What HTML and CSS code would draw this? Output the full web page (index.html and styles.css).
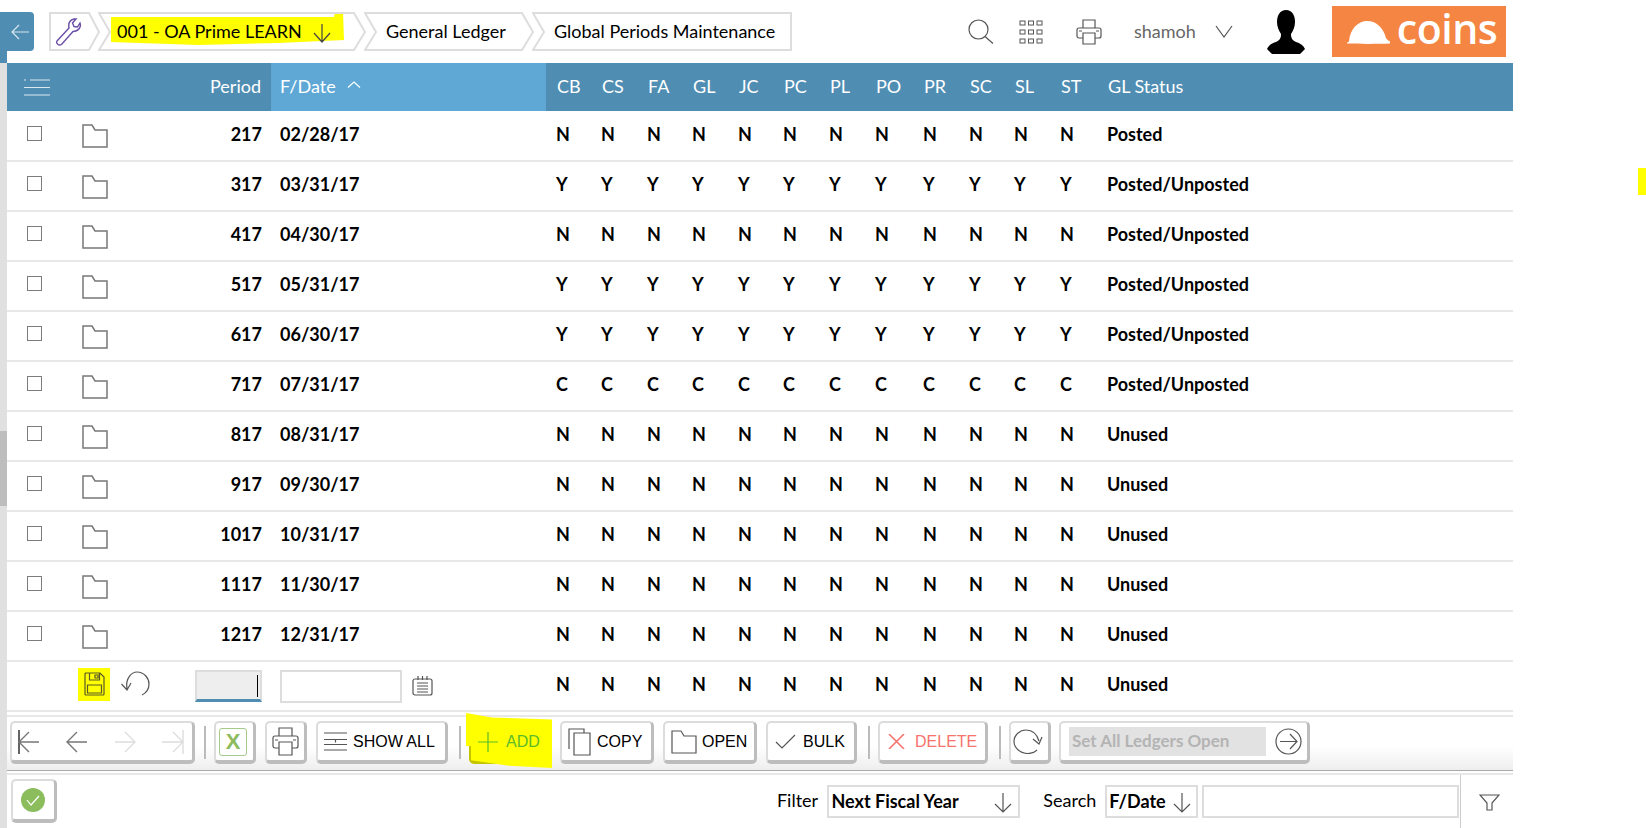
FILE: index.html
```html
<!DOCTYPE html>
<html lang="en">
<head>
    <meta charset="UTF-8">
    <title>Global Periods Maintenance</title>
    <link rel="stylesheet" href="styles.css">
</head>
<body>

<header class="topbar">
    <button class="back" type="button">
        <svg width="18" height="16" viewBox="0 0 18 16"><path d="M18 8H1M8 1L1 8l7 7"/></svg>
    </button>

    <nav class="crumbs">
        <div class="crumb crumb-tool">
            <svg class="crumb-frame" width="51" height="39"><polygon points="1,1 40,1 50,20 40,38 1,38"/></svg>
            <svg class="wrench" width="27" height="28" viewBox="0 0 27 28"><path d="M2 23L14 10C13 5 15 2 19 1h2l-3.500 4 1.500 3.500 3.500.5L25 5c1.500 4-1.500 8.500-7 8.500L6.500 26.500C4 28 .5 25.500 2 23z"/></svg>
        </div>
        <div class="crumb crumb-company">
            <svg class="crumb-frame" width="268" height="39">
                <polygon class="marker" points="13,5 236,5 237,0 245,0 246,28 180,31 100,33 13,30"/>
                <polygon points="1,1 256,1 267,20 256,38 1,38 12,20"/>
            </svg>
            <span class="crumb-text">001 - OA Prime LEARN</span>
            <svg class="arrow-down" width="20" height="19" viewBox="0 0 20 19"><path d="M10 0v18M2 9l8 9 8-9"/></svg>
        </div>
        <div class="crumb crumb-ledger">
            <svg class="crumb-frame" width="170" height="39"><polygon points="1,1 158,1 169,20 158,38 1,38 12,20"/></svg>
            <span class="crumb-text">General Ledger</span>
        </div>
        <div class="crumb crumb-global">
            <svg class="crumb-frame" width="260" height="39"><polygon points="1,1 259,1 259,38 1,38 12,20"/></svg>
            <span class="crumb-text">Global Periods Maintenance</span>
        </div>
    </nav>

    <div class="top-tools">
        <svg class="tool-search" width="26" height="25" viewBox="0 0 26 25"><circle cx="10.500" cy="10.500" r="9.500"/><path d="M17 17.500l8 7"/></svg>
        <svg class="tool-apps" width="24" height="24" viewBox="0 0 24 24">
            <rect x="1" y="1" width="5" height="4"/><rect x="9.500" y="1" width="5" height="4"/><rect x="18" y="1" width="5" height="4"/>
            <rect x="1" y="10" width="5" height="4"/><rect x="9.500" y="10" width="5" height="4"/><rect x="18" y="10" width="5" height="4"/>
            <rect x="1" y="19" width="5" height="4"/><rect x="9.500" y="19" width="5" height="4"/><rect x="18" y="19" width="5" height="4"/>
        </svg>
        <svg class="tool-print" width="26" height="26" viewBox="0 0 26 26"><path d="M7 9V1h12v8M7 19H3a2 2 0 0 1-2-2v-6a2 2 0 0 1 2-2h20a2 2 0 0 1 2 2v6a2 2 0 0 1-2 2h-4M7 14h12v11H7zM3 12h3M20 12h3"/></svg>
        <span class="user-name">shamoh</span>
        <svg class="user-caret" width="18" height="13" viewBox="0 0 18 13"><path d="M1 1l8 11 8-11"/></svg>
        <svg class="avatar" width="38" height="44" viewBox="0 0 38 44"><path d="M19 0c6 0 9 5 9 12 0 5-2 9-4 12 0 4 1 6 5 8 4 1 7 3 9 7l-5 5H5l-5-5c2-4 5-6 9-7 4-2 5-4 5-8-2-3-4-7-4-12C10 5 13 0 19 0z"/></svg>
        <div class="logo">
            <svg width="44" height="24" viewBox="0 0 44 24"><path d="M0 23.500c0-1 1-1.500 2-2C3 9 11 1 20 1c9 0 16 6 19 17 1 2 3 3 4 3.500v2C30 24 12 24 0 23.500z"/></svg>
            <span class="logo-text">coins</span>
        </div>
    </div>
</header>

<div class="page">
    <aside class="rail"><div class="rail-thumb"></div></aside>

    <main class="content">
        <table class="grid">
            <colgroup>
                <col class="c-check"><col class="c-open"><col class="c-period"><col class="c-date">
                <col class="c45"><col class="c46"><col class="c45"><col class="c46"><col class="c45"><col class="c46">
                <col class="c46"><col class="c48"><col class="c46"><col class="c45"><col class="c46"><col class="c47">
                <col class="c-status">
            </colgroup>
            <thead>
                <tr>
                    <th class="menu-cell"><svg width="26" height="17" viewBox="0 0 26 17"><path d="M0 1h2M6 1h20M0 8.500h26M0 16h26"/></svg></th>
                    <th></th>
                    <th class="num">Period</th>
                    <th class="sorted">F/Date <svg width="14" height="7" viewBox="0 0 14 7"><path d="M1 6.500L7 1l6 5.500"/></svg></th>
                    <th>CB</th><th>CS</th><th>FA</th><th>GL</th><th>JC</th><th>PC</th><th>PL</th><th>PO</th><th>PR</th><th>SC</th><th>SL</th><th>ST</th>
                    <th>GL Status</th>
                </tr>
            </thead>
            <tbody>
                <tr><td class="check"><span class="box"></span></td><td><svg class="folder" width="26" height="24" viewBox="0 0 26 24"><path d="M1 1h9l3 5h12v17H1z"/></svg></td><td class="num">217</td><td class="date">02/28/17</td><td>N</td><td>N</td><td>N</td><td>N</td><td>N</td><td>N</td><td>N</td><td>N</td><td>N</td><td>N</td><td>N</td><td>N</td><td>Posted</td></tr>
                <tr><td class="check"><span class="box"></span></td><td><svg class="folder" width="26" height="24" viewBox="0 0 26 24"><path d="M1 1h9l3 5h12v17H1z"/></svg></td><td class="num">317</td><td class="date">03/31/17</td><td>Y</td><td>Y</td><td>Y</td><td>Y</td><td>Y</td><td>Y</td><td>Y</td><td>Y</td><td>Y</td><td>Y</td><td>Y</td><td>Y</td><td>Posted/Unposted</td></tr>
                <tr><td class="check"><span class="box"></span></td><td><svg class="folder" width="26" height="24" viewBox="0 0 26 24"><path d="M1 1h9l3 5h12v17H1z"/></svg></td><td class="num">417</td><td class="date">04/30/17</td><td>N</td><td>N</td><td>N</td><td>N</td><td>N</td><td>N</td><td>N</td><td>N</td><td>N</td><td>N</td><td>N</td><td>N</td><td>Posted/Unposted</td></tr>
                <tr><td class="check"><span class="box"></span></td><td><svg class="folder" width="26" height="24" viewBox="0 0 26 24"><path d="M1 1h9l3 5h12v17H1z"/></svg></td><td class="num">517</td><td class="date">05/31/17</td><td>Y</td><td>Y</td><td>Y</td><td>Y</td><td>Y</td><td>Y</td><td>Y</td><td>Y</td><td>Y</td><td>Y</td><td>Y</td><td>Y</td><td>Posted/Unposted</td></tr>
                <tr><td class="check"><span class="box"></span></td><td><svg class="folder" width="26" height="24" viewBox="0 0 26 24"><path d="M1 1h9l3 5h12v17H1z"/></svg></td><td class="num">617</td><td class="date">06/30/17</td><td>Y</td><td>Y</td><td>Y</td><td>Y</td><td>Y</td><td>Y</td><td>Y</td><td>Y</td><td>Y</td><td>Y</td><td>Y</td><td>Y</td><td>Posted/Unposted</td></tr>
                <tr><td class="check"><span class="box"></span></td><td><svg class="folder" width="26" height="24" viewBox="0 0 26 24"><path d="M1 1h9l3 5h12v17H1z"/></svg></td><td class="num">717</td><td class="date">07/31/17</td><td>C</td><td>C</td><td>C</td><td>C</td><td>C</td><td>C</td><td>C</td><td>C</td><td>C</td><td>C</td><td>C</td><td>C</td><td>Posted/Unposted</td></tr>
                <tr><td class="check"><span class="box"></span></td><td><svg class="folder" width="26" height="24" viewBox="0 0 26 24"><path d="M1 1h9l3 5h12v17H1z"/></svg></td><td class="num">817</td><td class="date">08/31/17</td><td>N</td><td>N</td><td>N</td><td>N</td><td>N</td><td>N</td><td>N</td><td>N</td><td>N</td><td>N</td><td>N</td><td>N</td><td>Unused</td></tr>
                <tr><td class="check"><span class="box"></span></td><td><svg class="folder" width="26" height="24" viewBox="0 0 26 24"><path d="M1 1h9l3 5h12v17H1z"/></svg></td><td class="num">917</td><td class="date">09/30/17</td><td>N</td><td>N</td><td>N</td><td>N</td><td>N</td><td>N</td><td>N</td><td>N</td><td>N</td><td>N</td><td>N</td><td>N</td><td>Unused</td></tr>
                <tr><td class="check"><span class="box"></span></td><td><svg class="folder" width="26" height="24" viewBox="0 0 26 24"><path d="M1 1h9l3 5h12v17H1z"/></svg></td><td class="num">1017</td><td class="date">10/31/17</td><td>N</td><td>N</td><td>N</td><td>N</td><td>N</td><td>N</td><td>N</td><td>N</td><td>N</td><td>N</td><td>N</td><td>N</td><td>Unused</td></tr>
                <tr><td class="check"><span class="box"></span></td><td><svg class="folder" width="26" height="24" viewBox="0 0 26 24"><path d="M1 1h9l3 5h12v17H1z"/></svg></td><td class="num">1117</td><td class="date">11/30/17</td><td>N</td><td>N</td><td>N</td><td>N</td><td>N</td><td>N</td><td>N</td><td>N</td><td>N</td><td>N</td><td>N</td><td>N</td><td>Unused</td></tr>
                <tr><td class="check"><span class="box"></span></td><td><svg class="folder" width="26" height="24" viewBox="0 0 26 24"><path d="M1 1h9l3 5h12v17H1z"/></svg></td><td class="num">1217</td><td class="date">12/31/17</td><td>N</td><td>N</td><td>N</td><td>N</td><td>N</td><td>N</td><td>N</td><td>N</td><td>N</td><td>N</td><td>N</td><td>N</td><td>Unused</td></tr>
                <tr class="edit-row">
                    <td colspan="2">
                        <div class="edit-actions">
                            <span class="save-mark"><svg width="21" height="24" viewBox="0 0 21 24"><path d="M2 1h14l4 4v17a1 1 0 0 1-1 1H2a1 1 0 0 1-1-1V2a1 1 0 0 1 1-1zM5.500 1v7h10V1M11 3h3v3h-3zM3.500 13h14v8h-14z"/></svg></span>
                            <svg class="undo" width="29" height="26" viewBox="0 0 29 26"><path d="M6 18C4 7 11 1 16 1c7 0 12 6 12 12 0 5-3 9-7 11M.5 13L6 19l4-7"/></svg>
                        </div>
                    </td>
                    <td class="num"><span class="field-period"><span class="caret"></span></span></td>
                    <td class="date">
                        <div class="date-edit">
                            <span class="field-date"></span>
                            <svg width="21" height="20" viewBox="0 0 21 20"><path d="M3 3h15a2 2 0 0 1 2 2v12a2 2 0 0 1-2 2H3a2 2 0 0 1-2-2V5a2 2 0 0 1 2-2zM6 0v4M10.500 0v4M15 0v4M5 7h11M5 10h11M5 13h11M5 16h11"/></svg>
                        </div>
                    </td>
                    <td>N</td><td>N</td><td>N</td><td>N</td><td>N</td><td>N</td><td>N</td><td>N</td><td>N</td><td>N</td><td>N</td><td>N</td><td>Unused</td>
                </tr>
            </tbody>
        </table>

        <div class="toolbar">
            <div class="btn nav-group">
                <svg class="nav-on" width="22" height="24" viewBox="0 0 22 24"><path class="nav-bar" d="M1 0v24"/><path d="M21 12H1M11 2L1 12l10 10"/></svg>
                <svg class="nav-on" width="22" height="24" viewBox="0 0 22 24"><path d="M21 12H1M11 2L1 12l10 10"/></svg>
                <svg class="nav-off" width="22" height="24" viewBox="0 0 22 24"><path d="M1 12h20M11 2l10 10-10 10"/></svg>
                <svg class="nav-off" width="22" height="24" viewBox="0 0 22 24"><path d="M0 12h21M11 2l10 10-10 10M21 0v24"/></svg>
            </div>
            <span class="sep sep-first"></span>
            <button class="btn btn-excel" type="button"><span class="excel-x">X</span></button>
            <button class="btn btn-print" type="button">
                <svg width="27" height="29" viewBox="0 0 27 29"><path d="M7 9V1h13v8M7 21H3a2 2 0 0 1-2-2v-8a2 2 0 0 1 2-2h21a2 2 0 0 1 2 2v8a2 2 0 0 1-2 2h-4M7 15h13v13H7zM3 13h3M21 13h3"/></svg>
            </button>
            <button class="btn btn-showall" type="button">
                <svg width="23" height="19" viewBox="0 0 23 19"><path d="M0 1h23M0 7.500h23M0 12.500h23M0 18h23M11.500 7.500v3"/></svg>
                SHOW ALL
            </button>
            <span class="sep"></span>
            <button class="btn btn-add" type="button">
                <svg width="20" height="20" viewBox="0 0 20 20"><path d="M10 0v20M0 10h20"/></svg>
                ADD
            </button>
            <button class="btn btn-copy" type="button">
                <svg width="23" height="28" viewBox="0 0 23 28"><path d="M1 21V1h15v4M6 5h16v22H6z"/></svg>
                COPY
            </button>
            <button class="btn btn-open" type="button">
                <svg width="26" height="24" viewBox="0 0 26 24"><path d="M1 1h9l3 5h12v17H1z"/></svg>
                OPEN
            </button>
            <button class="btn btn-bulk" type="button">
                <svg width="21" height="15" viewBox="0 0 21 15"><path d="M1 8l6 6L20 1"/></svg>
                BULK
            </button>
            <span class="sep"></span>
            <button class="btn btn-delete" type="button">
                <svg width="17" height="15" viewBox="0 0 17 15"><path d="M1 0l15 15M16 0L1 15"/></svg>
                DELETE
            </button>
            <span class="sep"></span>
            <button class="btn btn-refresh" type="button">
                <svg width="30" height="25" viewBox="0 0 30 25"><path d="M24 21c-2.500 2.500-6 3.500-9 3.500C7.500 24.500 1 19 1 12.500S7 1 13 1c6 0 11 4 13 11M20 10l6 5 3-7"/></svg>
            </button>
            <div class="btn btn-set">
                <span class="set-field">Set All Ledgers Open</span>
                <svg width="27" height="27" viewBox="0 0 27 27"><circle cx="13.500" cy="13.500" r="12.500"/><path d="M5 13.500h17M15 6l7 7.500-7 7.500"/></svg>
            </div>
        </div>

        <footer class="footer">
            <button class="btn btn-status" type="button">
                <svg width="24" height="24" viewBox="0 0 24 24"><circle class="ok-dot" cx="12" cy="12" r="12"/><path class="ok-tick" d="M6 12l4 5 8-9"/></svg>
            </button>
            <label class="filter-label">Filter</label>
            <div class="select select-filter">
                <span>Next Fiscal Year</span>
                <svg width="18" height="20" viewBox="0 0 18 20"><path d="M9 0v19M1 11l8 8 8-8"/></svg>
            </div>
            <label class="search-label">Search</label>
            <div class="select select-search">
                <span>F/Date</span>
                <svg width="18" height="20" viewBox="0 0 18 20"><path d="M9 0v19M1 11l8 8 8-8"/></svg>
            </div>
            <div class="search-input"></div>
            <div class="filter-cell">
                <svg width="21" height="17" viewBox="0 0 21 17"><path d="M1 1h19l-7 8v7H8V9z"/></svg>
            </div>
        </footer>
    </main>
</div>

<div class="margin-mark"></div>

</body>
</html>
```

FILE: styles.css
```css
* {
    box-sizing: border-box;
}

html, body {
    margin: 0;
    height: 828px;
    overflow: hidden;
    background-color: #fff;
}

body {
    position: relative;
    font-family: "Lato", "Liberation Sans", sans-serif;
    font-size: 18px;
    color: #000;
}

svg {
    display: block;
    flex: none;
    fill: none;
    stroke: #555;
    stroke-width: 1.2;
}

/* top bar */
.topbar {
    display: flex;
    height: 63px;
    padding-top: 12px;
    background: linear-gradient(#4f8db3, #4f8db3) no-repeat 0 12px / 7px 51px;
}

.back {
    width: 34px;
    height: 39px;
    padding: 0 0 0 11px;
    border: none;
    border-radius: 0 4px 4px 0;
    background-color: #4f8db3;
}

.back svg {
    stroke: #d7e6ef;
}

.crumbs {
    display: flex;
    height: 39px;
    margin-left: 15px;
}

.crumb {
    position: relative;
    display: flex;
    align-items: center;
    height: 39px;
}

.crumb-frame {
    position: absolute;
    top: 0;
    left: 0;
    stroke: #ddd;
    stroke-width: 2;
}

.crumb-frame .marker {
    fill: #ffff00;
    stroke: none;
}

.crumb-text {
    position: relative;
    padding-bottom: 2px;
}

.crumb-tool {
    width: 49px;
}

.wrench {
    position: relative;
    margin-left: 6px;
    stroke: #6a4ea8;
    stroke-width: 1.4;
}

.crumb-company {
    width: 266px;
    padding-left: 19px;
}

.arrow-down {
    position: relative;
    margin-left: 10px;
    margin-top: 3px;
    stroke: #444;
}

.crumb-ledger {
    width: 168px;
    padding-left: 22px;
}

.crumb-global {
    width: 260px;
    padding-left: 22px;
}

.top-tools {
    display: flex;
    align-items: center;
    height: 51px;
    margin-top: -6px;
    margin-left: 176px;
}

.tool-apps {
    margin-left: 25px;
    stroke-width: 1;
}

.tool-print {
    margin-left: 33px;
}

.user-name {
    margin-left: 32px;
    color: #666;
    padding-bottom: 2px;
}

.user-caret {
    margin-left: 19px;
}

.avatar {
    margin-left: 34px;
    fill: #000;
    stroke: none;
}

.logo {
    display: flex;
    align-items: center;
    width: 174px;
    height: 51px;
    margin-left: 27px;
    padding-left: 15px;
    background-color: #f48542;
}

.logo svg {
    fill: #fff;
    stroke: none;
}

.logo-text {
    margin-left: 6px;
    font-family: "Open Sans", sans-serif;
    font-size: 41px;
    font-weight: 600;
    letter-spacing: -0.5px;
    line-height: 51px;
    color: #fff;
    padding-bottom: 7px;
}

/* page body */
.page {
    display: flex;
    height: 765px;
}

.rail {
    width: 7px;
    background-color: #e0e0e0;
}

.rail-thumb {
    height: 75px;
    margin-top: 368px;
    background-color: #bdbdbd;
}

.content {
    width: 1506px;
}

/* grid */
.grid {
    width: 1506px;
    table-layout: fixed;
    border-collapse: collapse;
}

.c-check { width: 63px; }
.c-open { width: 50px; }
.c-period { width: 151px; }
.c-date { width: 275px; }
.c45 { width: 45px; }
.c46 { width: 46px; }
.c47 { width: 47px; }
.c48 { width: 48px; }
.c-status { width: 416px; }

.grid th {
    height: 48px;
    padding: 0 0 2px 11px;
    background-color: #4f8db3;
    font-weight: 400;
    text-align: left;
    color: #fff;
}

.grid th.num {
    padding: 0 10px 2px 0;
    text-align: right;
}

.grid th.sorted {
    padding-left: 9px;
    background-color: #5fa8d6;
}

.sorted svg {
    display: inline-block;
    margin: 0 0 5px 7px;
    stroke: #fff;
}

.grid .menu-cell {
    padding-left: 17px;
    padding-bottom: 0;
}

.menu-cell svg {
    stroke: #dbe8f0;
}

.grid td {
    height: 50px;
    padding: 0 0 4px 10px;
    border-bottom: 2px solid #e8e8e8;
    font-weight: 700;
    white-space: nowrap;
}

.grid td.num {
    padding-left: 0;
    padding-right: 9px;
    text-align: right;
}

.grid td.date {
    padding-left: 9px;
}

.grid td.check {
    padding: 0 0 5px 20px;
}

.edit-row td.num,
.edit-row td.date {
    padding-bottom: 0;
}

.box {
    display: block;
    width: 15px;
    height: 15px;
    border: 1.5px solid #7c7c7c;
}

.folder {
    margin: 5px 0 0 2px;
    stroke: #777;
    stroke-width: 1.5;
}

.edit-actions {
    display: flex;
    align-items: center;
    gap: 11px;
    margin-left: 61px;
}

.save-mark {
    display: flex;
    flex: none;
    justify-content: center;
    align-items: center;
    width: 32px;
    height: 33px;
    background-color: #ffff00;
}

.save-mark svg {
    stroke: #5a5a2a;
}

.field-period {
    display: inline-flex;
    justify-content: flex-end;
    align-items: center;
    width: 67px;
    height: 32px;
    padding-right: 2px;
    vertical-align: middle;
    border: 2px solid #ddd;
    border-bottom: 3px solid #4f8db3;
    background-color: #eee;
}

.caret {
    width: 1px;
    height: 22px;
    background-color: #000;
}

.date-edit {
    display: flex;
    align-items: center;
    gap: 10px;
}

.field-date {
    width: 122px;
    height: 33px;
    border: 2px solid #ddd;
}

/* toolbar */
.toolbar {
    display: flex;
    align-items: flex-start;
    gap: 9px;
    height: 56px;
    margin-top: 3px;
    padding: 4px 0 0 3px;
    border-top: 2px solid #e8e8e8;
    border-bottom: 1px solid #aaa;
    background: linear-gradient(#fff 55%, #eee);
}

.btn {
    display: flex;
    align-items: center;
    height: 43px;
    padding: 0 0 0 6px;
    border: 2px solid #dcdcdc;
    border-right: 3px solid #bdbdbd;
    border-bottom: 4px solid #bdbdbd;
    border-radius: 5px;
    background-color: #fff;
    font-family: "Liberation Sans", sans-serif;
    font-size: 16px;
    color: #000;
}

.sep {
    width: 2px;
    height: 33px;
    margin-top: 5px;
    margin-left: 2px;
    margin-right: -1px;
    background-color: #bbb;
}

.sep-first {
    margin-left: 0;
}

.nav-group {
    gap: 26px;
    width: 185px;
    background-color: #fff;
}

.nav-on path {
    stroke: #777;
    stroke-width: 1.4;
}

.nav-on .nav-bar {
    stroke: #222;
}

.nav-off {
    stroke: #ddd;
    stroke-width: 1.4;
}

.btn-excel {
    width: 42px;
    padding-left: 3px;
}

.excel-x {
    display: block;
    width: 28px;
    height: 28px;
    border: 1.500px solid #a5c98a;
    border-radius: 3px;
    font-size: 22px;
    font-weight: 700;
    line-height: 25px;
    text-align: center;
    color: #8dbb5e;
}

.btn-print {
    width: 42px;
    padding-left: 5px;
}

.btn-showall {
    gap: 6px;
    width: 132px;
}

.btn-add {
    position: relative;
    z-index: 0;
    gap: 8px;
    width: 82px;
    padding-left: 7px;
    border-color: #c4c400;
    background-color: #ffff00;
    color: #5dbb2a;
}

.btn-add::before {
    content: "";
    position: absolute;
    z-index: -1;
    top: -10px;
    right: -4px;
    bottom: -8px;
    left: -5px;
    background-color: #ffff00;
    clip-path: polygon(0 0, 30% 8%, 100% 12%, 100% 100%, 50% 96%, 6% 86%, 6% 60%, 0 60%);
}

.btn-add svg {
    stroke: #5dbb2a;
}

.btn-copy {
    gap: 6px;
    width: 94px;
}

.btn-open {
    gap: 5px;
    width: 94px;
}

.btn-bulk {
    gap: 7px;
    width: 91px;
    padding-left: 7px;
}

.btn-delete {
    gap: 10px;
    width: 110px;
    padding-left: 8px;
    color: #f7746e;
}

.btn-delete svg {
    stroke: #f7746e;
    stroke-width: 1.6;
}

.btn-refresh {
    width: 42px;
    padding-left: 2px;
}

.btn-set {
    gap: 9px;
    width: 251px;
    margin-left: -1px;
    padding-left: 8px;
}

.set-field {
    width: 197px;
    height: 29px;
    padding-left: 3px;
    background-color: #e2e2e2;
    font-family: "Lato", sans-serif;
    font-size: 17px;
    font-weight: 700;
    line-height: 27px;
    color: #b4b4b4;
}

/* footer */
.footer {
    display: flex;
    align-items: center;
    height: 54px;
    margin-top: 2px;
    border-top: 2px solid #e8e8e8;
}

.btn-status {
    width: 46px;
    height: 44px;
    margin-left: 4px;
    padding-left: 8px;
}

.ok-dot {
    fill: #8bbd5d;
    stroke: none;
}

.ok-tick {
    stroke: #fff;
}

.filter-label {
    margin-left: 720px;
    width: 50.500px;
    padding-bottom: 2px;
}

.select {
    display: flex;
    justify-content: space-between;
    align-items: center;
    height: 33px;
    padding: 0 5px 0 2px;
    border: 2px solid #ddd;
    font-weight: 700;
}

.select span {
    padding-bottom: 1px;
}

.select svg {
    margin-top: 3px;
}

.select-filter {
    width: 193px;
    padding-right: 6px;
}

.search-label {
    margin-left: 23px;
    width: 62px;
    padding-bottom: 2px;
}

.select-search {
    width: 93px;
    padding-right: 5px;
}

.search-input {
    width: 257px;
    height: 33px;
    margin-left: 4px;
    border: 2px solid #ddd;
}

.filter-cell {
    display: flex;
    align-items: center;
    align-self: stretch;
    width: 53px;
    margin-left: 1px;
    margin-bottom: -2px;
    padding-left: 18px;
    border-left: 1px solid #ccc;
}

/* highlighter stroke in the right margin */
.margin-mark {
    position: absolute;
    top: 168px;
    right: 0;
    width: 8px;
    height: 27px;
    background-color: #ffff00;
}
```
